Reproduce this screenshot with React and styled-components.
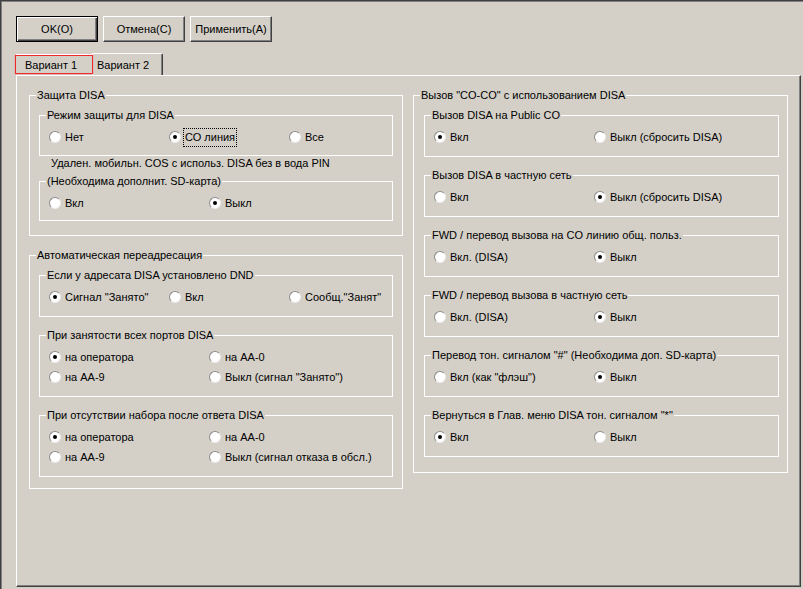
import React from 'react';
import styled, { createGlobalStyle } from 'styled-components';

const Global = createGlobalStyle`
  html, body { margin: 0; padding: 0; background: #d4d0c8; }
  body { font-family: "Liberation Sans", Arial, sans-serif; font-size: 11px; color: #000; }
  *, *::before, *::after { box-sizing: border-box; }
`;

const Window = styled.div`
  width: 803px;
  height: 589px;
  background: #d4d0c8;
  border-top: 1px solid #404040;
  border-left: 1px solid #404040;
  box-shadow: inset 1px 1px 0 #808080;
  padding: 15px 0 0 15px;
  display: flex;
  flex-direction: column;
  overflow: hidden;
`;

const ButtonBar = styled.div`
  display: flex;
  gap: 5px;
`;

const Button = styled.button`
  width: 82px;
  height: 26px;
  padding: 0;
  margin: 0;
  font: 11px "Liberation Sans", Arial, sans-serif;
  color: #000;
  background: #d4d0c8;
  border: 1px solid;
  border-color: ${p => (p.$default ? '#000' : '#fff #404040 #404040 #fff')};
  box-shadow: ${p =>
    p.$default
      ? 'inset 1px 1px 0 #fff, inset -1px -1px 0 #404040, inset -2px -2px 0 #808080'
      : 'inset -1px -1px 0 #808080'};
`;

const TabStrip = styled.div`
  display: flex;
  align-items: flex-start;
  height: 22px;
  margin-top: 11px;
  margin-left: -1px;
`;

const Tab = styled.div`
  position: relative;
  z-index: ${p => (p.$active ? 1 : 0)};
  display: flex;
  align-items: center;
  white-space: nowrap;
  width: ${p => p.$w}px;
  padding-left: ${p => p.$pl}px;
  height: ${p => (p.$active ? 19 : 22)}px;
  margin-top: ${p => (p.$active ? 2 : 0)}px;
  margin-left: ${p => (p.$active ? 0 : -1)}px;
  border-top: 1px solid ${p => (p.$active ? '#f02a2a' : '#fff')};
  border-left: 1px solid ${p => (p.$active ? '#f02a2a' : '#fff')};
  border-right: 1px solid ${p => (p.$active ? '#f02a2a' : '#404040')};
  border-bottom: ${p => (p.$active ? '1px solid #f02a2a' : 'none')};
  border-top-right-radius: ${p => (p.$active ? 0 : 2)}px;
  box-shadow: ${p =>
    p.$active ? '0 -2px 0 -1px #fff, 0 0 1px rgba(240,42,42,0.7)' : 'inset -1px 0 0 #808080'};
`;

const Panel = styled.div`
  width: 785px;
  height: 512px;
  border: 1px solid;
  border-color: #fff #404040 #404040 #fff;
  box-shadow: inset -1px -1px 0 #808080;
  padding: 13px 12px 0 12px;
  display: grid;
  grid-template-columns: 374px 375px;
  column-gap: 10px;
  align-items: start;
`;

const Column = styled.div`
  display: flex;
  flex-direction: column;
  gap: 13px;
`;

const Group = styled.fieldset`
  margin: 0;
  padding: 0;
  min-width: 0;
  border: 1px solid #fff;
  height: ${p => (p.$h ? `${p.$h}px` : 'auto')};
`;

const Caption = styled.legend`
  margin-left: 6px;
  padding: 0 1px;
  line-height: 13px;
  font-size: 11px;
  white-space: nowrap;
`;

const GroupBody = styled.div`
  display: flex;
  flex-direction: column;
  gap: ${p => p.$gap || 0}px;
  padding: ${p => p.$pad};
`;

const Options = styled.div`
  display: grid;
  grid-template-columns: repeat(${p => p.$cols}, ${p => p.$colw}px);
  grid-auto-rows: 20px;
  padding: 5px 0 0 9px;
`;

const Option = styled.label`
  display: flex;
  align-items: center;
  gap: 4px;
  height: 20px;
  white-space: nowrap;
  line-height: 13px;
`;

const RadioMark = styled.span`
  position: relative;
  flex: none;
  width: 12px;
  height: 12px;
  border-radius: 50%;
  background: #fff;
  border: 1px solid;
  border-color: #8c8c8c #ececec #ececec #8c8c8c;
  &::after {
    content: '';
    display: ${p => (p.$on ? 'block' : 'none')};
    position: absolute;
    left: 3px;
    top: 3px;
    width: 4px;
    height: 4px;
    border-radius: 50%;
    background: #000;
  }
`;

const OptionText = styled.span`
  padding: ${p => (p.$focus ? '2px 1px' : '0')};
  margin: ${p => (p.$focus ? '-2px -1px' : '0')};
  outline: ${p => (p.$focus ? '1px dotted #000' : 'none')};
`;

const Note = styled.div`
  line-height: 13px;
  padding-left: 12px;
  margin: 1px 0 5px;
  white-space: nowrap;
`;

function Radio({ label, on, focus }) {
  return (
    <Option>
      <RadioMark $on={on} />
      <OptionText $focus={focus}>{label}</OptionText>
    </Option>
  );
}

function Box({ title, h = 48, cols = 2, colw = 160, items }) {
  return (
    <Group $h={h}>
      <Caption>{title}</Caption>
      <Options $cols={cols} $colw={colw}>
        {items.map((it, i) => (
          <Radio key={i} label={it.l} on={it.on} focus={it.focus} />
        ))}
      </Options>
    </Group>
  );
}

const rightBoxes = [
  { t: 'Вызов DISA на Public CO', items: [{ l: 'Вкл', on: true }, { l: 'Выкл (сбросить DISA)' }] },
  { t: 'Вызов DISA в частную сеть', items: [{ l: 'Вкл' }, { l: 'Выкл (сбросить DISA)', on: true }] },
  { t: 'FWD / перевод вызова на CO линию общ. польз.', items: [{ l: 'Вкл. (DISA)' }, { l: 'Выкл', on: true }] },
  { t: 'FWD / перевод вызова в частную сеть', items: [{ l: 'Вкл. (DISA)' }, { l: 'Выкл', on: true }] },
  { t: 'Перевод тон. сигналом "#" (Необходима доп. SD-карта)', items: [{ l: 'Вкл (как "флэш")' }, { l: 'Выкл', on: true }] },
  { t: 'Вернуться в Глав. меню DISA тон. сигналом "*"', items: [{ l: 'Вкл', on: true }, { l: 'Выкл' }] },
];

export default function App() {
  return (
    <>
      <Global />
      <Window>
        <ButtonBar>
          <Button $default>OK(O)</Button>
          <Button>Отмена(С)</Button>
          <Button>Применить(А)</Button>
        </ButtonBar>
        <TabStrip>
          <Tab $active $w={78} $pl={9}>Вариант 1</Tab>
          <Tab $w={71} $pl={4}>Вариант 2</Tab>
        </TabStrip>
        <Panel>
          <Column>
            <Group>
              <Caption>Защита DISA</Caption>
              <GroupBody $pad="7px 9px 14px 9px">
                <Box
                  title="Режим защиты для DISA"
                  h={47}
                  cols={3}
                  colw={120}
                  items={[{ l: 'Нет' }, { l: 'СО линия', on: true, focus: true }, { l: 'Все' }]}
                />
                <Note>Удален. мобильн. COS с использ. DISA без в вода PIN</Note>
                <Box
                  title="(Необходима дополнит. SD-карта)"
                  h={46}
                  items={[{ l: 'Вкл' }, { l: 'Выкл', on: true }]}
                />
              </GroupBody>
            </Group>
            <Group>
              <Caption>Автоматическая переадресация</Caption>
              <GroupBody $pad="7px 9px 11px 9px" $gap={12}>
                <Box
                  title="Если у адресата DISA установлено DND"
                  cols={3}
                  colw={120}
                  items={[{ l: 'Сигнал "Занято"', on: true }, { l: 'Вкл' }, { l: 'Сообщ."Занят"' }]}
                />
                <Box
                  title="При занятости всех портов DISA"
                  h={68}
                  items={[
                    { l: 'на оператора', on: true },
                    { l: 'на AA-0' },
                    { l: 'на AA-9' },
                    { l: 'Выкл (сигнал "Занято")' },
                  ]}
                />
                <Box
                  title="При отсутствии набора после ответа DISA"
                  h={68}
                  items={[
                    { l: 'на оператора', on: true },
                    { l: 'на AA-0' },
                    { l: 'на AA-9' },
                    { l: 'Выкл (сигнал отказа в обсл.)' },
                  ]}
                />
              </GroupBody>
            </Group>
          </Column>
          <Column>
            <Group>
              <Caption>Вызов "CO-CO" с использованием DISA</Caption>
              <GroupBody $pad="7px 8px 15px 10px" $gap={12}>
                {rightBoxes.map((b, i) => (
                  <Box key={i} title={b.t} items={b.items} />
                ))}
              </GroupBody>
            </Group>
          </Column>
        </Panel>
      </Window>
    </>
  );
}
